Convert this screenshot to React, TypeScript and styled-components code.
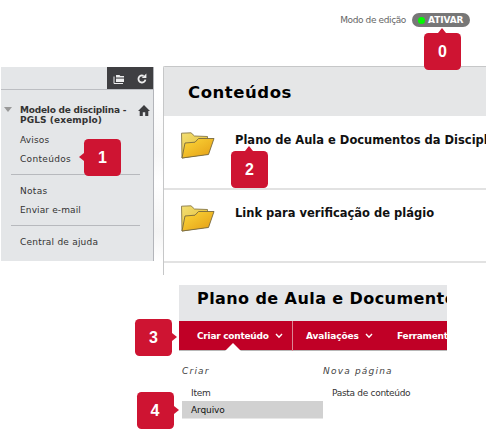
import React from "react";
import styled, { createGlobalStyle, css } from "styled-components";

const GlobalStyle = createGlobalStyle`
  * { box-sizing: border-box; }
  html, body { margin: 0; padding: 0; background: #fff; }
  body { font-family: "DejaVu Sans", Verdana, sans-serif; color: #333; overflow: hidden; }
  svg { flex: none; }
`;

const Label = styled.span<{ $size: number; $track?: number }>`
  font-size: ${(p) => p.$size}px;
  letter-spacing: ${(p) => p.$track ?? 0}px;
  white-space: nowrap;
`;

const Page = styled.div`
  width: 486px;
  height: 431px;
  overflow: hidden;
  display: flex;
  flex-direction: column;
`;

const EditBar = styled.header`
  height: 66px;
  flex: none;
  display: flex;
  align-items: flex-start;
  justify-content: flex-end;
  gap: 6px;
  padding: 13px 16px 0 0;
  line-height: 14px;
  color: #666;
`;

const Toggle = styled.div`
  position: relative;
  width: 58px;
  height: 14px;
  border-radius: 7px;
  background: #777;
  color: #fff;
  font-weight: bold;
  display: flex;
  align-items: center;
  gap: 3px;
  padding-left: 6px;
`;

const Led = styled.i`
  width: 7px;
  height: 7px;
  border-radius: 50%;
  background: #00fa00;
  flex: none;
`;

type Side = "up" | "left" | "right";

const tips = {
  up: css`left: 14px; top: -5px; border-width: 0 4.5px 5px; border-bottom-color: #ce1432;`,
  left: css`left: -5px; top: 14px; border-width: 4.5px 5px 4.5px 0; border-right-color: #ce1432;`,
  right: css`right: -5px; top: 14px; border-width: 4.5px 0 4.5px 5px; border-left-color: #ce1432;`,
};

const Callout = styled.b<{ $side: Side; $x: number; $y: number }>`
  position: absolute;
  z-index: 2;
  left: ${(p) => p.$x}px;
  top: ${(p) => p.$y}px;
  width: 37px;
  height: 37px;
  border-radius: 4.5px;
  background: #ce1432;
  color: #fff;
  font: bold 16px/38px "Liberation Sans", Arial, sans-serif;
  text-align: center;
  &::after {
    content: "";
    position: absolute;
    border: 0 solid transparent;
    ${(p) => tips[p.$side]}
  }
`;

const Workspace = styled.div`
  height: 209px;
  flex: none;
  display: flex;
  align-items: flex-start;
`;

const Sidebar = styled.aside`
  position: relative;
  margin: 1px 0 0 1px;
  width: 153px;
  height: 194px;
  flex: none;
  background: #e4e6e8;
  border-right: 1px solid #b3b5ba;
`;

const SideTools = styled.div`
  height: 23px;
  display: flex;
  justify-content: flex-end;
  border-bottom: 1px solid #bcbec2;
`;

const ToolGroup = styled.div`
  width: 46px;
  height: 22px;
  background: #3f3f42;
  display: flex;
  align-items: center;
  justify-content: space-between;
  padding: 1px 6px 0 6px;
`;

const CourseHead = styled.div`
  display: flex;
  align-items: flex-start;
  height: 40px;
  padding: 15px 3px 0 3px;
  font-weight: bold;
  line-height: 10px;
`;

const Arrow = styled.i`
  margin: 2px 8px 0 0;
  border: 4px solid transparent;
  border-top: 5px solid #999;
  border-bottom: 0;
`;

const CourseName = styled.div`
  flex: 1;
  min-width: 0;
  display: flex;
  flex-direction: column;
`;

const NavList = styled.nav`
  display: flex;
  flex-direction: column;
  padding-left: 19px;
`;

const NavItem = styled.a`
  height: 19px;
  line-height: 15px;
`;

const Rule = styled.hr`
  width: 129px;
  margin: 6px 0 6px -9px;
  border: 0;
  border-top: 1px solid #b7b9bd;
`;

const Gap = styled.div`
  width: 9px;
  height: 195px;
  flex: none;
  background: linear-gradient(#fff 15%, #f7f7f7 45%, #fff 60%, #f4f4f4 85%, #fff);
`;

const Content = styled.main`
  flex: 1;
  min-width: 0;
  height: 209px;
  border: solid #c6c7c8;
  border-width: 1px 0 0 1px;
  border-top-left-radius: 2px;
  overflow: hidden;
`;

const ContentTitle = styled.h1`
  margin: 0;
  height: 49px;
  background: #e5e6e7;
  color: #000;
  line-height: 50px;
  padding-left: 24px;
  font-size: 17px;
`;

const Entry = styled.div<{ $h: number; $top: number }>`
  position: relative;
  display: flex;
  align-items: flex-start;
  height: ${(p) => p.$h}px;
  padding: ${(p) => p.$top}px 0 0 16px;
  gap: 20px;
  border-bottom: 2px solid #e2e2e2;
  color: #111;
  font-weight: bold;
  line-height: 17px;
`;

const EntryList = styled.div`
  position: relative;
`;

const ModulePanel = styled.section`
  position: relative;
  margin: 10px 0 0 179px;
  width: 268px;
  flex: none;
`;

const ModuleTitle = styled.h2`
  margin: 0;
  height: 36px;
  overflow: hidden;
  background: #e5e6e8;
  color: #000;
  padding-left: 18px;
  line-height: 27px;
  font-size: 16px;
`;

const ActionBar = styled.div`
  display: flex;
  height: 30px;
  overflow: hidden;
  background: linear-gradient(#c00026 29px, #b8b8b8 29px);
  color: #fff;
  font-weight: bold;
  line-height: 29px;
`;

const Action = styled.div<{ $w: number; $pad: number; $open?: boolean; $divided?: boolean }>`
  position: relative;
  flex: none;
  width: ${(p) => p.$w}px;
  height: 30px;
  padding-left: ${(p) => p.$pad}px;
  display: flex;
  align-items: center;
  gap: 6px;
  border-left: ${(p) => (p.$divided ? "1px solid #dc8796" : "0")};
  ${(p) => p.$open && css`
    &::after {
      content: "";
      position: absolute;
      left: 46px;
      bottom: 0;
      border: 8px solid transparent;
      border-top: 0;
      border-bottom-color: #fff;
    }
  `}
`;

const Menu = styled.div`
  display: grid;
  grid-template-columns: 141px 1fr;
  padding: 13px 0 0 3px;
`;

const MenuHead = styled.div`
  height: 20px;
  line-height: 10px;
  font-style: italic;
  color: #444;
`;

const MenuItem = styled.div<{ $active?: boolean }>`
  height: 17px;
  line-height: 14px;
  padding-left: 9px;
  color: #333;
  ${(p) => p.$active && css`background: #d1d1d1; box-shadow: 0 1px #e7e7e7; color: #111;`}
`;

const FolderIcon = ({ id }: { id: string }) => (
  <svg width="35" height="27" viewBox="0 0 35 27">
    <defs>
      <linearGradient id={id + "b"} x1="0" y1="0" x2="1" y2="1">
        <stop offset="0" stopColor="#f3df74" /><stop offset="1" stopColor="#e2b92c" />
      </linearGradient>
      <linearGradient id={id + "f"} x1="0" y1="0" x2="1" y2="1">
        <stop offset="0" stopColor="#fdd93a" /><stop offset="1" stopColor="#e39c14" />
      </linearGradient>
    </defs>
    <path d="M1.5 1.2 L11 .8 L14.5 4 L27.5 4.5 L27.8 22 L2 26 Z" fill={`url(#${id}b)`} stroke="#88794a" strokeWidth=".9" />
    <path d="M5 11 L15 10.2 L18.5 6.5 L34 6.5 L28.5 22.5 L2 26 Z" fill={`url(#${id}f)`} stroke="#77693f" strokeWidth=".9" strokeLinejoin="round" />
  </svg>
);

const FoldersIcon = () => (
  <svg width="12" height="10" viewBox="0 0 12 10">
    <path d="M1 2.5V9.5H10" fill="none" stroke="#eee" />
    <path d="M3 1H6.5L7.3 2H11V3.6H3Z" fill="#eee" />
    <path d="M3 4.6H11V8H3Z" fill="#eee" />
  </svg>
);

const RefreshIcon = () => (
  <svg width="10" height="11" viewBox="0 0 10 11">
    <path d="M6.6 2.9A3.5 3.5 0 1 0 8.4 6.6" fill="none" stroke="#eee" strokeWidth="1.8" />
    <path d="M4.8 5H9.4V.4Z" fill="#eee" />
  </svg>
);

const HomeIcon = () => (
  <svg width="12" height="11" viewBox="0 0 12 11">
    <path d="M6 0L12 6H10.3V11H7.2V7.3H4.8V11H1.7V6H0L6 0Z" fill="#3c3d40" />
  </svg>
);

const Chevron = () => (
  <svg width="8" height="6" viewBox="0 0 8 6">
    <path d="M1 1L4 4.2L7 1" fill="none" stroke="#fff" strokeWidth="1.4" />
  </svg>
);

export default function App() {
  return (
    <Page>
      <GlobalStyle />
      <EditBar>
        <Label $size={9} $track={-0.38}>Modo de edição</Label>
        <Toggle>
          <Led />
          <Label $size={9} $track={-0.1}>ATIVAR</Label>
          <Callout $side="up" $x={12} $y={20}>0</Callout>
        </Toggle>
      </EditBar>
      <Workspace>
        <Sidebar>
          <SideTools>
            <ToolGroup><FoldersIcon /><RefreshIcon /></ToolGroup>
          </SideTools>
          <CourseHead>
            <Arrow />
            <CourseName>
              <Label $size={9} $track={-0.22}>Modelo de disciplina -</Label>
              <Label $size={9} $track={0.1}>PGLS (exemplo)</Label>
            </CourseName>
            <HomeIcon />
          </CourseHead>
          <NavList>
            <NavItem><Label $size={9} $track={0.15}>Avisos</Label></NavItem>
            <NavItem><Label $size={9} $track={0.33}>Conteúdos</Label></NavItem>
            <Rule />
            <NavItem><Label $size={9} $track={0.3}>Notas</Label></NavItem>
            <NavItem><Label $size={9} $track={0.12}>Enviar e-mail</Label></NavItem>
            <Rule />
            <NavItem><Label $size={9} $track={0.22}>Central de ajuda</Label></NavItem>
          </NavList>
          <Callout $side="left" $x={83} $y={72}>1</Callout>
        </Sidebar>
        <Gap />
        <Content>
          <ContentTitle><Label $size={16.5} $track={0.55}>Conteúdos</Label></ContentTitle>
          <EntryList>
            <Entry $h={74} $top={16}>
              <FolderIcon id="plan" />
              <Label $size={11.5}>Plano de Aula e Documentos da Discipl</Label>
              <Callout $side="up" $x={67} $y={35}>2</Callout>
            </Entry>
            <Entry $h={73} $top={15}>
              <FolderIcon id="link" />
              <Label $size={11.5}>Link para verificação de plágio</Label>
            </Entry>
          </EntryList>
        </Content>
      </Workspace>
      <ModulePanel>
        <ModuleTitle><Label $size={16} $track={0.42}>Plano de Aula e Documento</Label></ModuleTitle>
        <ActionBar>
          <Action $w={113} $pad={18} $open><Label $size={9} $track={-0.25}>Criar conteúdo</Label><Chevron /></Action>
          <Action $w={100} $pad={13} $divided><Label $size={9} $track={-0.1}>Avaliações</Label><Chevron /></Action>
          <Action $w={60} $pad={5}><Label $size={9} $track={-0.25}>Ferrament</Label></Action>
        </ActionBar>
        <Menu>
          <div>
            <MenuHead><Label $size={9} $track={1.2}>Criar</Label></MenuHead>
            <MenuItem><Label $size={9} $track={-0.2}>Item</Label></MenuItem>
            <MenuItem $active><Label $size={9} $track={-0.1}>Arquivo</Label></MenuItem>
          </div>
          <div>
            <MenuHead><Label $size={9} $track={1.2}>Nova página</Label></MenuHead>
            <MenuItem><Label $size={9} $track={-0.3}>Pasta de conteúdo</Label></MenuItem>
          </div>
        </Menu>
        <Callout $side="right" $x={-44} $y={34}>3</Callout>
        <Callout $side="right" $x={-42.5} $y={107}>4</Callout>
      </ModulePanel>
    </Page>
  );
}
